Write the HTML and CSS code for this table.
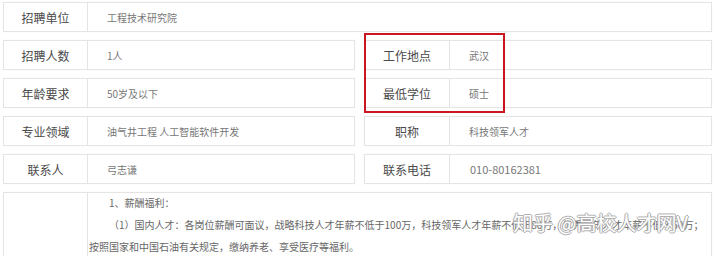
FILE: index.html
```html
<!DOCTYPE html>
<html lang="zh-CN">
<head>
<meta charset="utf-8">
<link rel="stylesheet" href="styles.css">
</head>
<body>
<div class="page">
  <div class="row full">
    <div class="label">招聘单位</div>
    <div class="value">工程技术研究院</div>
  </div>
  <div class="pair">
    <div class="row half-l">
      <div class="label">招聘人数</div>
      <div class="value">1人</div>
    </div>
    <div class="row half-r">
      <div class="label">工作地点</div>
      <div class="value">武汉</div>
    </div>
  </div>
  <div class="pair">
    <div class="row half-l">
      <div class="label">年龄要求</div>
      <div class="value">50岁及以下</div>
    </div>
    <div class="row half-r">
      <div class="label">最低学位</div>
      <div class="value">硕士</div>
    </div>
  </div>
  <div class="pair">
    <div class="row half-l">
      <div class="label">专业领域</div>
      <div class="value">油气井工程 人工智能软件开发</div>
    </div>
    <div class="row half-r">
      <div class="label">职称</div>
      <div class="value">科技领军人才</div>
    </div>
  </div>
  <div class="pair">
    <div class="row half-l">
      <div class="label">联系人</div>
      <div class="value">弓志谦</div>
    </div>
    <div class="row half-r">
      <div class="label">联系电话</div>
      <div class="value num">010-80162381</div>
    </div>
  </div>
  <div class="row full desc">
    <div class="label"></div>
    <div class="text">
      <p class="line ind">1、薪酬福利：</p>
      <p class="line ind">（1）国内人才：各岗位薪酬可面议，战略科技人才年薪不低于100万，科技领军人才年薪不低于80万，优秀青年人才年薪不低于50万；</p>
      <p class="line">按照国家和中国石油有关规定，缴纳养老、享受医疗等福利。</p>
    </div>
  </div>
  <div class="mark"></div>
  <div class="watermark">知乎 @高校人才网V</div>
</div>
</body>
</html>
```
FILE: styles.css
```css
html, body {
  margin: 0;
  padding: 0;
  background: #fff;
}
body {
  width: 720px;
  height: 256px;
  overflow: hidden;
  font-family: "Noto Sans CJK SC", "Noto Sans", sans-serif;
}
.page {
  position: relative;
  height: 256px;
  box-sizing: border-box;
  overflow: hidden;
  padding: 2px 8px 0 3px;
  display: flex;
  flex-direction: column;
  gap: 8px;
}
.row {
  display: grid;
  grid-template-columns: 84px 1fr;
  height: 30px;
  flex: none;
  box-sizing: border-box;
  border: 1px solid #e4e4e4;
  box-shadow: 0 0 1px rgba(0,0,0,0.06);
}
.pair {
  display: grid;
  grid-template-columns: 352px 348px;
  gap: 9px;
}
.half-r {
  grid-template-columns: 85px 1fr;
}
.label {
  border-right: 1px solid #e4e4e4;
  display: flex;
  align-items: center;
  justify-content: center;
  font-size: 12px;
  color: #4a4a4a;
}
.value {
  display: flex;
  align-items: center;
  padding-left: 19px;
  font-size: 10px;
  color: #777;
  white-space: nowrap;
}
.value.num {
  font-size: 11px;
  padding-left: 20px;
}
.desc {
  height: 64px;
  border-bottom: none;
}
.text {
  padding: 0 0 0 1px;
  min-width: 0;
}
.line {
  margin: 0;
  line-height: 22px;
  font-size: 10px;
  white-space: nowrap;
  color: #666;
}
.line.ind {
  text-indent: 20px;
}
.line:first-child {
  margin-top: -1px;
}
.mark {
  position: absolute;
  left: 364px;
  top: 33px;
  width: 141px;
  height: 80px;
  box-sizing: border-box;
  border: 2px solid #c9161f;
}
.watermark {
  position: absolute;
  left: 513px;
  top: 208px;
  font-size: 20px;
  color: #ffffff;
  text-shadow: 1px 0 0 #a8a8a8, -1px 0 0 #a8a8a8, 0 1px 0 #b0b0b0, 0 -1px 0 #b0b0b0;
  white-space: nowrap;
}
```
